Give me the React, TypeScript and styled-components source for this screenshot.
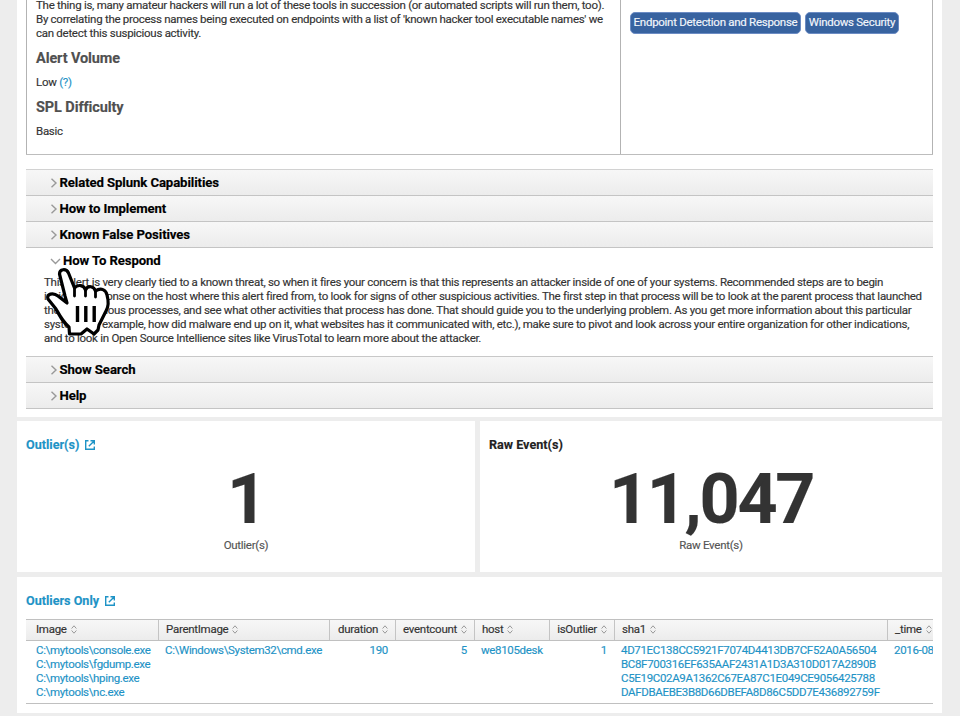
import React from "react";
import styled, { createGlobalStyle } from "styled-components";

const GlobalStyle = createGlobalStyle`
  * { box-sizing: border-box; }
  html, body { margin: 0; height: 716px; overflow: hidden; background: #ededed; }
  body {
    font-family: Roboto, "Liberation Sans", sans-serif;
    font-size: 11.5px;
    line-height: 14px;
    letter-spacing: -0.28px;
    color: #333;
    -webkit-text-stroke: 0.15px currentColor;
  }
`;

const Page = styled.main`
  position: relative;
  width: 960px;
  height: 716px;
  padding: 0 18px 0 17px;
  overflow: hidden;
  display: flex;
  flex-direction: column;
`;

const Panel = styled.section<{ $height: number }>`
  flex: none;
  height: ${(p) => p.$height}px;
  padding: 0 9px;
  background: #fff;
  overflow: hidden;
`;

const Summary = styled.div`
  display: grid;
  grid-template-columns: 594px 313px;
  height: 155px;
  border-bottom: 1px solid #bdbdbd;
`;

const SummaryCell = styled.div`
  border-left: 1px solid #b3b3b3;
  padding-left: 9px;
`;

const TagCell = styled(SummaryCell)`
  border-right: 1px solid #b3b3b3;
  display: flex;
  align-items: flex-start;
  gap: 4px;
  padding-top: 12px;
`;

const Line = styled.div`
  white-space: pre;
  height: 14px;
`;

const Description = styled.div`
  margin-top: -2px;
`;

const Heading = styled.h3`
  margin: 9px 0 0;
  height: 20px;
  font-size: 14.5px;
  line-height: 20px;
  font-weight: 700;
  letter-spacing: -0.1px;
  color: #505050;
  white-space: nowrap;
`;

const Value = styled.p`
  margin: 6px 0 0;
  height: 14px;
`;

const Link = styled.span`
  color: #1e93c6;
`;

const Tag = styled.span<{ $width: number }>`
  width: ${(p) => p.$width}px;
  height: 22px;
  border: 1px solid #6c8cc4;
  border-radius: 5px;
  background: #3863a0;
  color: #f3f6fb;
  text-align: center;
  line-height: 18px;
  white-space: nowrap;
`;

const Accordion = styled.div`
  margin-top: 14px;
  border-top: 1px solid #d2d2d2;
`;

const AccordionHeader = styled.div<{ $open?: boolean }>`
  display: flex;
  align-items: center;
  gap: ${(p) => (p.$open ? 2.5 : 2)}px;
  height: 26px;
  padding-left: 23.5px;
  border-bottom: 1px solid ${(p) => (p.$open ? "#fff" : "#c4c4c4")};
  background: ${(p) => (p.$open ? "#fff" : "linear-gradient(#f7f7f7, #ececec)")};
  color: #000;
  font-size: 13.2px;
  letter-spacing: -0.11px;
  font-weight: 700;
  white-space: nowrap;
`;

const AccordionBody = styled.div`
  height: 83px;
  padding: 1px 0 0 18px;
  border-bottom: 1px solid #c8c8c8;
`;

const Metrics = styled.div`
  display: grid;
  grid-template-columns: 458px 462px;
  gap: 5px;
  margin: 4px 0 5px;
`;

const PanelTitle = styled.h2<{ $link?: boolean }>`
  display: flex;
  align-items: center;
  gap: 6px;
  margin: 0;
  padding-top: 15px;
  height: 33px;
  font-size: 12.6px;
  letter-spacing: 0;
  line-height: 18px;
  font-weight: 700;
  white-space: nowrap;
  color: ${(p) => (p.$link ? "#1e93c6" : "#222")};
`;

const Metric = styled.div`
  display: flex;
  flex-direction: column;
  align-items: center;
`;

const BigNumber = styled.div`
  height: 70px;
  margin: 10px 0 4px;
  font-size: 70px;
  line-height: 70px;
  font-weight: 700;
  letter-spacing: -2.3px;
  color: #333;
`;

const Caption = styled.div`
  color: #555;
`;

const Table = styled.div`
  margin-top: 9px;
  border-top: 1px solid #c0c0c0;
  border-bottom: 1px solid #c0c0c0;
  height: 85px;
  overflow: hidden;
`;

const TableRow = styled.div`
  display: grid;
  grid-template-columns: 132px 171px 66px 79px 75px 65px 273px 46px;
`;

const HeadRow = styled(TableRow)`
  height: 21px;
  border-bottom: 1px solid #c0c0c0;
  background: linear-gradient(#f7f7f7, #ececec);
`;

const HeadCell = styled.div<{ $right?: boolean; $first?: boolean }>`
  display: flex;
  align-items: center;
  gap: 4px;
  padding: 0 7px 2px ${(p) => (p.$first ? 10 : 7)}px;
  border-left: ${(p) => (p.$first ? "none" : "1px solid #c4c4c4")};
  justify-content: ${(p) => (p.$right ? "flex-end" : "flex-start")};
  white-space: nowrap;
  svg { flex: none; }
  &:last-child { padding-right: 0; }
`;

const Cell = styled.div<{ $right?: boolean; $first?: boolean }>`
  padding: 2px 7px 0 ${(p) => (p.$first ? 10 : 7)}px;
  text-align: ${(p) => (p.$right ? "right" : "left")};
  letter-spacing: -0.33px;
  color: #1e93c6;
  white-space: nowrap;
  &:last-child { padding-right: 0; }
`;

const Pointer = styled.svg`
  position: absolute;
  left: 40.5px;
  top: 262px;
`;

const Chevron = ({ down }: { down?: boolean }) =>
  down ? (
    <svg width="11" height="10" viewBox="0 0 11 10">
      <path d="M1 3 5.5 7.5 10 3" fill="none" stroke="#999" strokeWidth="1.4" />
    </svg>
  ) : (
    <svg width="8" height="10" viewBox="0 0 8 10">
      <path d="M1.5 .8 6 5 1.5 9.2" fill="none" stroke="#999" strokeWidth="1.4" />
    </svg>
  );

const OpenIcon = () => (
  <svg width="10" height="10" viewBox="0 0 10 10">
    <path d="M3.5 .7H.7V9.3H9.3V6.5M5.5 .7H9.3V4.5M9.1.9 3.8 6.2" fill="none" stroke="#1e93c6" strokeWidth="1.4" />
  </svg>
);

const SortIcon = () => (
  <svg width="6" height="9" viewBox="0 0 6 9">
    <path d="M.6 3.5 3 .8 5.4 3.5M.6 5.5 3 8.2 5.4 5.5" fill="none" stroke="#999" strokeWidth="1" />
  </svg>
);

const HandIcon = () => (
  <Pointer width="74" height="78" viewBox="0 0 74 78">
    <path
      d="M18.5 12C18.5 7 25 6 27.5 11L33.5 26C37 22 43 23 44.5 28C47 23 53 24 54.5 29C60 25 65 28 66 33C68 40 68 44 65 49L58 63L57 68L53 72L46 67L40 72H28.5L28 65C22 60 20 56 15 47L7 37C5 32 12 30 17 34L26 41L24 34Z"
      fill="#fff"
      stroke="#000"
      strokeWidth="3.2"
      strokeLinejoin="round"
    />
    <path d="M33.5 26V34M44.5 28V34M54.5 29V35" fill="none" stroke="#000" strokeWidth="2.8" strokeLinecap="round" />
    <path d="M36.5 44V60M44.8 44V60M53.2 44V60" fill="none" stroke="#000" strokeWidth="3.4" />
  </Pointer>
);

const intro = [
  "The thing is, many amateur hackers will run a lot of these tools in succession (or automated scripts will run them, too).",
  "By correlating the process names being executed on endpoints with a list of 'known hacker tool executable names' we",
  "can detect this suspicious activity.",
];

const respond = [
  "This alert is very clearly tied to a known threat, so when it fires your concern is that this represents an attacker inside of one of your systems. Recommended steps are to begin",
  "incident response on the host where this alert fired from, to look for signs of other suspicious activities. The first step in that process will be to look at the parent process that launched",
  "these suspicious processes, and see what other activities that process has done. That should guide you to the underlying problem. As you get more information about this particular",
  "system (for example, how did malware end up on it, what websites has it communicated with, etc.), make sure to pivot and look across your entire organization for other indications,",
  "and to look in Open Source Intellience sites like VirusTotal to learn more about the attacker.",
];

const columns = [
  { name: "Image", right: false, values: ["C:\\mytools\\console.exe", "C:\\mytools\\fgdump.exe", "C:\\mytools\\hping.exe", "C:\\mytools\\nc.exe"] },
  { name: "ParentImage", right: false, values: ["C:\\Windows\\System32\\cmd.exe"] },
  { name: "duration", right: true, values: ["190"] },
  { name: "eventcount", right: true, values: ["5"] },
  { name: "host", right: false, values: ["we8105desk"] },
  { name: "isOutlier", right: true, values: ["1"] },
  {
    name: "sha1",
    right: false,
    values: [
      "4D71EC138CC5921F7074D4413DB7CF52A0A56504",
      "BC8F700316EF635AAF2431A1D3A310D017A2890B",
      "C5E19C02A9A1362C67EA87C1E049CE9056425788",
      "DAFDBAEBE3B8D66DBEFA8D86C5DD7E436892759F",
    ],
  },
  { name: "_time", right: false, values: ["2016-08"] },
];

export default function App() {
  return (
    <Page>
      <GlobalStyle />
      <Panel $height={417}>
        <Summary>
          <SummaryCell>
            <Description>
              {intro.map((text) => (
                <Line key={text}>{text}</Line>
              ))}
            </Description>
            <Heading>Alert Volume</Heading>
            <Value>Low <Link>(?)</Link></Value>
            <Heading>SPL Difficulty</Heading>
            <Value>Basic</Value>
          </SummaryCell>
          <TagCell>
            <Tag $width={171}>Endpoint Detection and Response</Tag>
            <Tag $width={94}>Windows Security</Tag>
          </TagCell>
        </Summary>
        <Accordion>
          {["Related Splunk Capabilities", "How to Implement", "Known False Positives"].map((title) => (
            <AccordionHeader key={title}><Chevron />{title}</AccordionHeader>
          ))}
          <AccordionHeader $open><Chevron down />How To Respond</AccordionHeader>
          <AccordionBody>
            {respond.map((text) => (
              <Line key={text}>{text}</Line>
            ))}
          </AccordionBody>
          {["Show Search", "Help"].map((title) => (
            <AccordionHeader key={title}><Chevron />{title}</AccordionHeader>
          ))}
        </Accordion>
      </Panel>
      <Metrics>
        <Panel $height={151}>
          <PanelTitle $link>Outlier(s)<OpenIcon /></PanelTitle>
          <Metric>
            <BigNumber>1</BigNumber>
            <Caption>Outlier(s)</Caption>
          </Metric>
        </Panel>
        <Panel $height={151}>
          <PanelTitle>Raw Event(s)</PanelTitle>
          <Metric>
            <BigNumber>11,047</BigNumber>
            <Caption>Raw Event(s)</Caption>
          </Metric>
        </Panel>
      </Metrics>
      <Panel $height={136}>
        <PanelTitle $link>Outliers Only<OpenIcon /></PanelTitle>
        <Table>
          <HeadRow>
            {columns.map((c, i) => (
              <HeadCell key={c.name} $right={c.right} $first={i === 0}>{c.name}<SortIcon /></HeadCell>
            ))}
          </HeadRow>
          <TableRow>
            {columns.map((c, i) => (
              <Cell key={c.name} $right={c.right} $first={i === 0}>
                {c.values.map((v) => <Line key={v}>{v}</Line>)}
              </Cell>
            ))}
          </TableRow>
        </Table>
      </Panel>
      <HandIcon />
    </Page>
  );
}
